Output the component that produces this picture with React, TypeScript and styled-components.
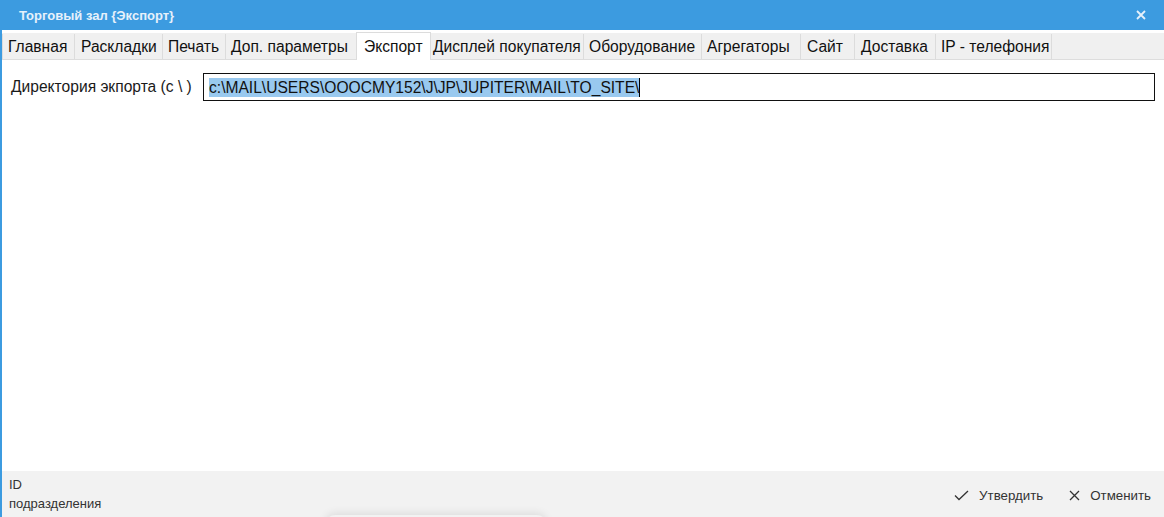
import React from 'react';
import styled, { createGlobalStyle } from 'styled-components';

const GlobalStyle = createGlobalStyle`
  html, body {
    margin: 0;
    padding: 0;
    background: #ffffff;
  }
  body {
    font-family: 'Liberation Sans', Arial, sans-serif;
  }
`;

const Window = styled.div`
  display: flex;
  flex-direction: column;
  width: 1164px;
  height: 517px;
  overflow: hidden;
  position: relative;
`;

const TitleBar = styled.div`
  display: flex;
  align-items: center;
  justify-content: space-between;
  height: 30px;
  flex-shrink: 0;
  padding: 0 16px 0 19px;
  background: #3c9be0;
  color: #e6f1fb;
  font-size: 13px;
  font-weight: bold;
`;

const CloseButton = styled.button`
  display: flex;
  align-items: center;
  justify-content: center;
  width: 14px;
  height: 14px;
  padding: 0;
  border: none;
  background: transparent;
  cursor: pointer;
`;

const Body = styled.div`
  flex: 1;
  display: flex;
  flex-direction: column;
  border-left: 2px solid #3c9be0;
  min-height: 0;
`;

const TabStrip = styled.div`
  display: flex;
  align-items: flex-end;
  height: 27px;
  margin-top: 3px;
  background: #f0f0f0;
  border-bottom: 1px solid #dddddd;
  box-sizing: border-box;
`;

const Tab = styled.div<{ $active?: boolean; $first?: boolean; $width: number; $pad: number }>`
  display: flex;
  align-items: center;
  flex-shrink: 0;
  box-sizing: border-box;
  width: ${p => p.$width}px;
  height: ${p => (p.$active ? '28px' : '25px')};
  margin-bottom: ${p => (p.$active ? '-1px' : '0')};
  padding: ${p => (p.$active ? `0 0 0 ${p.$pad}px` : `1px 0 0 ${p.$pad - 1}px`)};
  background: ${p => (p.$active ? '#ffffff' : '#f0f0f0')};
  border-right: 1px solid #dcdcdc;
  border-left: ${p => (p.$active || p.$first ? '1px solid #dcdcdc' : 'none')};
  border-top: ${p => (p.$active ? '1px solid #dcdcdc' : 'none')};
  margin-left: ${p => (p.$active ? '-1px' : '0')};
  font-size: 15.6px;
  color: #111111;
  white-space: nowrap;
  overflow: hidden;
`;

const Content = styled.div`
  flex: 1;
  padding: 13px 9px 0 9px;
  background: #ffffff;
`;

const FieldRow = styled.div`
  display: flex;
  align-items: center;
`;

const FieldLabel = styled.label`
  width: 192px;
  flex-shrink: 0;
  font-size: 15.6px;
  color: #1a1a1a;
`;

const PathInput = styled.div`
  flex: 1;
  box-sizing: border-box;
  height: 28px;
  display: flex;
  align-items: center;
  padding-left: 5px;
  border: 1px solid #111111;
  font-size: 15.6px;
  color: #111111;
`;

const Selected = styled.span`
  background: #99c9ef;
  line-height: 19px;
`;

const Caret = styled.span`
  display: inline-block;
  width: 1px;
  height: 19px;
  background: #000000;
`;

const Footer = styled.div`
  height: 46px;
  flex-shrink: 0;
  display: flex;
  align-items: center;
  justify-content: space-between;
  padding: 0 13px 0 7px;
  background: #f2f2f2;
`;

const Unit = styled.div`
  display: flex;
  flex-direction: column;
  gap: 3px;
  font-size: 13px;
  color: #333333;
  line-height: 16px;
`;

const Actions = styled.div`
  display: flex;
  align-items: center;
  gap: 26px;
  margin-top: 2px;
`;

const ActionButton = styled.button`
  display: flex;
  align-items: center;
  gap: 10px;
  padding: 0;
  border: none;
  background: transparent;
  font-family: 'Liberation Sans', Arial, sans-serif;
  font-size: 13.3px;
  color: #333333;
  cursor: pointer;
`;

const Shadow = styled.div`
  position: absolute;
  left: 325px;
  bottom: -18px;
  width: 222px;
  height: 20px;
  border-radius: 10px;
  box-shadow: 0 -2px 8px rgba(0, 0, 0, 0.09);
  background: #f2f2f2;
`;

const tabs: { title: string; width: number; pad: number }[] = [
  { title: 'Главная', width: 73, pad: 6 },
  { title: 'Раскладки', width: 88, pad: 7 },
  { title: 'Печать', width: 63, pad: 6 },
  { title: 'Доп. параметры', width: 131, pad: 6 },
  { title: 'Экспорт', width: 75, pad: 7 },
  { title: 'Дисплей покупателя', width: 153, pad: 3 },
  { title: 'Оборудование', width: 118, pad: 6 },
  { title: 'Агрегаторы', width: 99, pad: 6 },
  { title: 'Сайт', width: 54, pad: 7 },
  { title: 'Доставка', width: 81, pad: 7 },
  { title: 'IP - телефония', width: 116, pad: 6 },
];

const CloseIcon = () => (
  <svg width="10" height="10" viewBox="0 0 10 10">
    <path d="M1 1 L9 9 M9 1 L1 9" stroke="#e6f1fb" strokeWidth="1.8" />
  </svg>
);

const CheckIcon = () => (
  <svg width="15" height="11" viewBox="0 0 15 11">
    <path d="M1 5.5 L5 9.5 L14 1" fill="none" stroke="#333" strokeWidth="1.3" />
  </svg>
);

const CrossIcon = () => (
  <svg width="11" height="11" viewBox="0 0 11 11">
    <path d="M1 1 L10 10 M10 1 L1 10" stroke="#333" strokeWidth="1.3" />
  </svg>
);

const App = () => (
  <>
    <GlobalStyle />
    <Window>
      <TitleBar>
        <span>Торговый зал {'{Экспорт}'}</span>
        <CloseButton>
          <CloseIcon />
        </CloseButton>
      </TitleBar>
      <Body>
        <TabStrip>
          {tabs.map((t, i) => (
            <Tab
              key={t.title}
              $active={t.title === 'Экспорт'}
              $first={i === 0}
              $width={t.width}
              $pad={t.pad}
            >
              {t.title}
            </Tab>
          ))}
        </TabStrip>
        <Content>
          <FieldRow>
            <FieldLabel>Директория экпорта (с \ )</FieldLabel>
            <PathInput>
              <Selected>c:\MAIL\USERS\OOOCMY152\J\JP\JUPITER\MAIL\TO_SITE\</Selected>
              <Caret />
            </PathInput>
          </FieldRow>
        </Content>
        <Footer>
          <Unit>
            <span>ID</span>
            <span>подразделения</span>
          </Unit>
          <Actions>
            <ActionButton>
              <CheckIcon />
              Утвердить
            </ActionButton>
            <ActionButton>
              <CrossIcon />
              Отменить
            </ActionButton>
          </Actions>
        </Footer>
      </Body>
      <Shadow />
    </Window>
  </>
);

export default App;
